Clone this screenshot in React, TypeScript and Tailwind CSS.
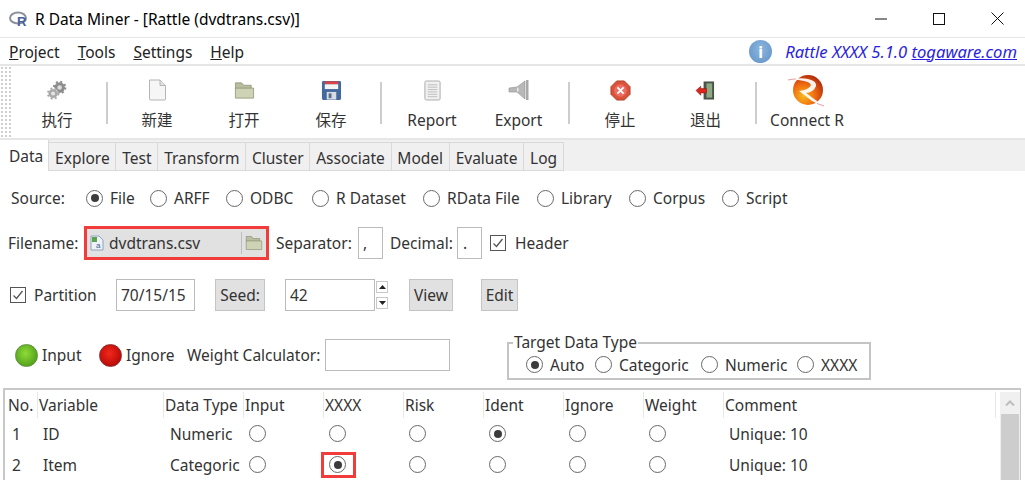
import { ReactNode } from "react";

const font = "font-['Noto_Sans','Noto_Sans_CJK_SC',sans-serif]";

function Radio({ on = false }: { on?: boolean }) {
  return (
    <span className="flex h-[17px] w-[17px] shrink-0 items-center justify-center rounded-full border-[1.5px] border-[#686868] bg-white">
      {on && <span className="h-[8px] w-[8px] rounded-full bg-[#3c3c3c]" />}
    </span>
  );
}

function Check() {
  return (
    <span className="flex h-[16px] w-[16px] shrink-0 items-center justify-center border border-[#555] bg-white">
      <svg width="14" height="14" viewBox="0 0 14 14" fill="none" stroke="#555" strokeWidth="1.3">
        <path d="M2.5 7.5 L5.5 10.5 L11.5 3" />
      </svg>
    </span>
  );
}

function Sep() {
  return <div className="mt-[16px] h-[42px] w-[2px] bg-[#cdcdcd]" />;
}

function Tool({ icon, label, w }: { icon: ReactNode; label: string; w: string }) {
  return (
    <div className={`flex flex-col items-center ${w}`}>
      <div className="mt-[12px] flex h-[24px] items-center justify-center">{icon}</div>
      <div className="mt-[8px] text-[15.5px] leading-[20px] whitespace-nowrap text-[#333]">{label}</div>
    </div>
  );
}

function Gears() {
  return (
    <svg width="22" height="21" viewBox="0 0 24 24">
      <circle cx="15" cy="8.5" r="6" fill="#8d8d8d" />
      <circle cx="15" cy="8.5" r="6.5" fill="none" stroke="#8d8d8d" strokeWidth="2.4" strokeDasharray="2.2 2.9" />
      <circle cx="15" cy="8.5" r="2.6" fill="#dcdcdc" />
      <circle cx="7.5" cy="15.5" r="5.6" fill="#a9a9a9" stroke="#fff" strokeWidth="0.8" />
      <circle cx="7.5" cy="15.5" r="6" fill="none" stroke="#a9a9a9" strokeWidth="2" strokeDasharray="2.2 2.7" />
      <circle cx="7.5" cy="15.5" r="2.3" fill="#e4e4e4" />
    </svg>
  );
}

function NewDoc() {
  return (
    <svg width="19" height="22" viewBox="0 0 19 22">
      <path d="M1.5 1 H12 L17.5 6.5 V20 Q17.5 21 16.5 21 H2.5 Q1.5 21 1.5 20 Z" fill="#f6f6f6" stroke="#b4b4b4" />
      <path d="M12 1 V6.5 H17.5" fill="#e2e2e2" stroke="#b4b4b4" />
    </svg>
  );
}

function Folder({ w = 21, h = 21 }: { w?: number; h?: number }) {
  return (
    <svg width={w} height={h} viewBox="0 0 22 22">
      <path d="M1.5 3 H8 L10 5.5 H18 V9 H1.5 Z" fill="#b9bea0" stroke="#8a8f72" strokeWidth="0.8" />
      <path d="M1.5 8.5 H20.5 V19 H1.5 Z" fill="#cfd3b6" stroke="#8a8f72" strokeWidth="0.8" />
    </svg>
  );
}

function Floppy() {
  return (
    <svg width="21" height="21" viewBox="0 0 22 22">
      <rect x="1" y="1" width="20" height="20" rx="1.5" fill="#45699e" />
      <rect x="4" y="1.5" width="14" height="3" fill="#e0433f" />
      <rect x="4" y="4.5" width="14" height="5" fill="#f4f4f4" />
      <rect x="6" y="12.5" width="10" height="8" fill="#d8dde4" />
      <rect x="8" y="14" width="3" height="5" fill="#5a6d88" />
    </svg>
  );
}

function Report() {
  return (
    <svg width="19" height="21" viewBox="0 0 20 22">
      <rect x="2" y="1" width="16" height="20" rx="1.5" fill="#f0f0f0" stroke="#aaa" />
      <path d="M5 5 H15 M5 7.5 H15 M5 10 H15 M5 12.5 H15 M5 15 H15 M5 17.5 H15" stroke="#bdbdbd" />
    </svg>
  );
}

function Funnel() {
  return (
    <svg width="22" height="22" viewBox="0 0 22 22">
      <path d="M1 9 L9 8 L17 2 V20 L9 13 L1 13 Z" fill="#b8b8b8" stroke="#8e8e8e" strokeWidth="0.6" />
      <path d="M9 8 Q13 11 9 13 Z" fill="#e6e6e6" />
      <rect x="18" y="1" width="2.5" height="20" fill="#a9a9a9" />
    </svg>
  );
}

function Stop() {
  return (
    <svg width="21" height="21" viewBox="0 0 22 22">
      <path d="M7 1 H15 L21 7 V15 L15 21 H7 L1 15 V7 Z" fill="#d9523a" stroke="#b23f2c" />
      <circle cx="11" cy="11" r="6.5" fill="#ee6d62" />
      <path d="M7.8 7.8 L14.2 14.2 M14.2 7.8 L7.8 14.2" stroke="#fff" strokeWidth="2" />
    </svg>
  );
}

function Quit() {
  return (
    <svg width="21" height="19" viewBox="0 0 22 20">
      <rect x="9" y="0.5" width="11" height="19" fill="#4b5249" />
      <rect x="12" y="2.5" width="6" height="15" fill="#8ea883" />
      <path d="M1 10 L6 5.5 V8 H12 V12.5 H6 V15 Z" fill="#d9261e" stroke="#8f1712" strokeWidth="0.6" />
    </svg>
  );
}

function RLogo() {
  return (
    <svg width="40" height="32" viewBox="0 0 40 32" className="overflow-visible">
      <defs>
        <radialGradient id="rl" cx="0.35" cy="0.7" r="0.8">
          <stop offset="0" stopColor="#f9b71c" />
          <stop offset="0.5" stopColor="#ee6a11" />
          <stop offset="1" stopColor="#a81f0c" />
        </radialGradient>
      </defs>
      <circle cx="21" cy="16" r="15" fill="url(#rl)" />
      <path d="M1 6 Q12 3 21 5 Q30 7 29 12 Q27 18 19 19 L36 31.5 Q30 30 25 27 L12 17 Q22 16 24 11 Q23 8 17 7 Q8 5 1 6 Z" fill="#fff" opacity="0.92" />
      <path d="M1 6 Q5 5 9 5" stroke="#e9a0a0" strokeWidth="1" fill="none" />
      <path d="M30 29.5 L37 32" stroke="#e9a0a0" strokeWidth="1" fill="none" />
    </svg>
  );
}

function Ball({ from, to, edge }: { from: string; to: string; edge: string }) {
  return <span className={`block h-[23px] w-[23px] shrink-0 rounded-full border ${edge} bg-radial-[at_45%_40%] ${from} ${to}`} />;
}

function Labeled({ on, label, cls }: { on?: boolean; label: string; cls: string }) {
  return (
    <div className={`flex items-center gap-[7px] ${cls}`}>
      <Radio on={on} />
      <span>{label}</span>
    </div>
  );
}

function Box({ children, cls }: { children?: ReactNode; cls: string }) {
  return <div className={`flex h-[32px] items-center border border-[#bbb] bg-white ${cls}`}>{children}</div>;
}

function Btn({ label, cls }: { label: string; cls: string }) {
  return (
    <div className={`flex h-[32px] items-center justify-center border border-[#c4c4c4] bg-[#e1e1e1] ${cls}`}>{label}</div>
  );
}

const tabs = ["Data", "Explore", "Test", "Transform", "Cluster", "Associate", "Model", "Evaluate", "Log"];
const headers: [string, string][] = [
  ["No.", "w-[33px] pl-[3px]"],
  ["Variable", "w-[126px] pl-[1px]"],
  ["Data Type", "w-[80px] pl-[1px]"],
  ["Input", "w-[80px] pl-[1px]"],
  ["XXXX", "w-[80px] pl-[1px]"],
  ["Risk", "w-[80px] pl-[1px]"],
  ["Ident", "w-[80px] pl-[1px]"],
  ["Ignore", "w-[80px] pl-[1px]"],
  ["Weight", "w-[80px] pl-[1px]"],
  ["Comment", "w-[272px] pl-[1px]"],
];

function Row({ no, name, type, pick, boxed }: { no: string; name: string; type: string; pick: number; boxed?: boolean }) {
  return (
    <div className="flex h-[31px] items-center">
      <span className="w-[38px] pl-[7px]">{no}</span>
      <span className="w-[127px]">{name}</span>
      <span className="w-[79px] whitespace-nowrap">{type}</span>
      {[0, 1, 2, 3, 4, 5].map((i) => (
        <span key={i} className="flex w-[80px] items-center">
          {boxed && i === 1 ? (
            <span className="ml-[-8px] flex h-[26px] w-[35px] items-center border-[3px] border-[#f23b3b] pl-[5px]">
              <Radio on />
            </span>
          ) : (
            <Radio on={pick === i} />
          )}
        </span>
      ))}
      <span className="whitespace-nowrap">Unique: 10</span>
    </div>
  );
}

export default function App() {
  return (
    <div className={`flex h-[480px] w-[1025px] flex-col overflow-hidden bg-white text-[15.5px] leading-[20px] text-[#333] ${font}`}>
      {/* title bar */}
      <div className="flex h-[38px] shrink-0 items-center border-b border-[#e5e5e5] text-black">
        <svg className="ml-[9px] overflow-visible" width="20" height="16" viewBox="0 0 20 16">
          <ellipse cx="9" cy="7" rx="8" ry="5.5" fill="none" stroke="#8a8f9a" strokeWidth="2" />
          <text x="8" y="15" fontSize="13" fontWeight="700" fill="#44629c" fontFamily="Liberation Sans">R</text>
        </svg>
        <span className="ml-[6px]">R Data Miner - [Rattle (dvdtrans.csv)]</span>
        <div className="ml-auto flex items-center">
          <svg width="12" height="12" viewBox="0 0 12 12" className="mr-[46px]"><path d="M0 6 H12" stroke="#111" /></svg>
          <svg width="12" height="12" viewBox="0 0 12 12" className="mr-[46px]"><rect x="0.5" y="0.5" width="11" height="11" fill="none" stroke="#111" /></svg>
          <svg width="13" height="13" viewBox="0 0 13 13" className="mr-[21px]"><path d="M0.5 0.5 L12.5 12.5 M12.5 0.5 L0.5 12.5" stroke="#111" /></svg>
        </div>
      </div>

      {/* menu */}
      <div className="flex h-[28px] shrink-0 items-center border-b-2 border-[#e6e6e6] pt-[1px] pl-[9px]">
        <div className="flex gap-[18px] text-[#222]">
          <span><u>P</u>roject</span>
          <span><u>T</u>ools</span>
          <span><u>S</u>ettings</span>
          <span><u>H</u>elp</span>
        </div>
        <div className="ml-auto flex items-center pr-[8px] text-[16.6px] text-[#2a1fe0] italic">
          <span className="flex h-[23px] w-[23px] items-center justify-center rounded-full bg-radial-[at_50%_40%] from-[#8db6de] to-[#5f92c6] text-[16px] font-bold text-white not-italic">i</span>
          <span className="ml-[13px]">Rattle XXXX 5.1.0 <u>togaware.com</u></span>
        </div>
      </div>

      {/* toolbar */}
      <div className="flex h-[74px] shrink-0 border-b-2 border-[#e6e6e6]">
        <div className="h-full w-[12px] bg-[radial-gradient(#cfcfcf_1px,transparent_1.2px)] bg-size-[4px_4px]" />
        <Tool icon={<Gears />} label="执行" w="w-[90px]" />
        <div className="w-[4px]" />
        <Sep />
        <Tool icon={<NewDoc />} label="新建" w="w-[98px]" />
        <Tool icon={<Folder />} label="打开" w="w-[76px]" />
        <Tool icon={<Floppy />} label="保存" w="w-[98px]" />
        <Sep />
        <Tool icon={<Report />} label="Report" w="w-[100px]" />
        <Tool icon={<Funnel />} label="Export" w="w-[73px]" />
        <div className="w-[13px]" />
        <Sep />
        <Tool icon={<Stop />} label="停止" w="w-[100px]" />
        <Tool icon={<Quit />} label="退出" w="w-[71px]" />
        <div className="w-[14px]" />
        <Sep />
        <Tool icon={<RLogo />} label="Connect R" w="w-[100px]" />
      </div>

      {/* tabs */}
      <div className="flex h-[31px] shrink-0 items-end bg-[#f0f0f0]">
        {tabs.map((t, i) => (
          <div
            key={t}
            className={
              i === 0
                ? "flex h-[31px] items-center border-r border-[#d9d9d9] bg-white pr-[5px] pl-[9px]"
                : "flex h-[29px] items-center border-t border-r border-b border-[#d9d9d9] bg-[#f0f0f0] px-[5.8px] pt-[2px]"
            }
          >
            {t}
          </div>
        ))}
      </div>

      {/* source row */}
      <div className="mt-[17px] flex h-[20px] shrink-0 items-center pl-[11px]">
        <span className="w-[75px]">Source:</span>
        <Labeled on label="File" cls="w-[64px]" />
        <Labeled label="ARFF" cls="w-[76px]" />
        <Labeled label="ODBC" cls="w-[86px]" />
        <Labeled label="R Dataset" cls="w-[111px]" />
        <Labeled label="RData File" cls="w-[114px]" />
        <Labeled label="Library" cls="w-[92px]" />
        <Labeled label="Corpus" cls="w-[93px]" />
        <Labeled label="Script" cls="" />
      </div>

      {/* filename row */}
      <div className="mt-[17px] flex h-[36px] shrink-0 items-center pl-[8px]">
        <span className="w-[76px]">Filename:</span>
        <div className="flex h-[34px] w-[185px] items-center border-[3px] border-[#f23b3b] bg-[#e1e1e1] pl-[2px]">
          <svg width="16" height="16" viewBox="0 0 16 16">
            <path d="M2 1 H10 L14 5 V15 H2 Z" fill="#eef2f7" stroke="#8ea3bf" />
            <rect x="3" y="2" width="5" height="5" fill="#5aa450" />
            <text x="7" y="13" fontSize="8" fill="#3a5d8f" fontFamily="Liberation Sans">a</text>
          </svg>
          <span className="ml-[4px] flex-1">dvdtrans.csv</span>
          <div className="h-[22px] w-px bg-[#bdbdbd]" />
          <span className="mx-[3px] flex"><Folder w={18} h={18} /></span>
        </div>
        <span className="ml-[7px] w-[76px]">Separator:</span>
        <div className="ml-[6px] flex h-[32px] w-[25px] items-center border border-[#bbb] pl-[4px]">,</div>
        <span className="ml-[7px] w-[61px]">Decimal:</span>
        <div className="ml-[6px] flex h-[32px] w-[25px] items-center border border-[#bbb] pl-[5px]">.</div>
        <span className="ml-[8px] flex"><Check /></span>
        <span className="ml-[9px]">Header</span>
      </div>

      {/* partition row */}
      <div className="mt-[18px] flex h-[32px] shrink-0 items-center pl-[10px]">
        <Check />
        <span className="ml-[8px] w-[82px]">Partition</span>
        <Box cls="w-[79px] pl-[4px]">70/15/15</Box>
        <Btn label="Seed:" cls="ml-[20px] w-[50px]" />
        <Box cls="ml-[20px] w-[90px] pl-[4px]">42</Box>
        <div className="ml-[1px] flex h-[28px] w-[12px] flex-col justify-between">
          <div className="flex h-[12px] items-center justify-center border border-[#c8c8c8]">
            <svg width="7" height="4" viewBox="0 0 7 4"><path d="M0 4 L3.5 0 L7 4 Z" fill="#222" /></svg>
          </div>
          <div className="flex h-[12px] items-center justify-center border border-[#c8c8c8]">
            <svg width="7" height="4" viewBox="0 0 7 4"><path d="M0 0 L3.5 4 L7 0 Z" fill="#222" /></svg>
          </div>
        </div>
        <Btn label="View" cls="ml-[21px] w-[44px]" />
        <Btn label="Edit" cls="ml-[28px] w-[37px]" />
      </div>

      {/* roles row */}
      <div className="mt-[28px] flex h-[41px] shrink-0 items-start pl-[15px]">
        <div className="flex h-[32px] items-center">
          <Ball from="from-[#8fdb3a]" to="to-[#3f8f10]" edge="border-[#5c8f3a]" />
          <span className="w-[61px] pl-[4px]">Input</span>
          <Ball from="from-[#f2281c]" to="to-[#a60000]" edge="border-[#8f2a2a]" />
          <span className="w-[65px] pl-[4px]">Ignore</span>
          <span className="w-[138px] whitespace-nowrap">Weight Calculator:</span>
          <Box cls="w-[125px]" />
        </div>
        <div className="relative mt-[3px] ml-[57px] flex h-[38px] w-[364px] items-center border-2 border-[#c4c4c4] pt-[7px] pl-[17px]">
          <span className="absolute top-[-12px] left-[4px] bg-white px-[1px]">Target Data Type</span>
          <Labeled on label="Auto" cls="w-[69px]" />
          <Labeled label="Categoric" cls="w-[106px]" />
          <Labeled label="Numeric" cls="w-[96px]" />
          <Labeled label="XXXX" cls="" />
        </div>
      </div>

      {/* variable table */}
      <div className="mt-[8px] mr-[4px] ml-[3px] flex min-h-0 flex-1 border-t-2 border-r border-l-2 border-[#c8c8c8] pt-[2px]">
        <div className="min-w-0 flex-1">
          <div className="flex h-[26px] items-center">
            {headers.map(([h, w]) => (
              <div key={h} className={`flex h-[26px] items-center border-r border-[#e8e8e8] whitespace-nowrap ${w}`}>
                {h}
              </div>
            ))}
          </div>
          <Row no="1" name="ID" type="Numeric" pick={3} />
          <Row no="2" name="Item" type="Categoric" pick={1} boxed />
        </div>
        <div className="flex w-[20px] shrink-0 flex-col bg-[#f0f0f0]">
          <div className="flex h-[22px] items-center justify-center">
            <svg width="10" height="6" viewBox="0 0 10 6" fill="none" stroke="#bdbdbd" strokeWidth="2"><path d="M1 5.5 L5 1.5 L9 5.5" /></svg>
          </div>
          <div className="mx-[1px] flex-1 bg-[#cdcdcd]" />
        </div>
      </div>
    </div>
  );
}
